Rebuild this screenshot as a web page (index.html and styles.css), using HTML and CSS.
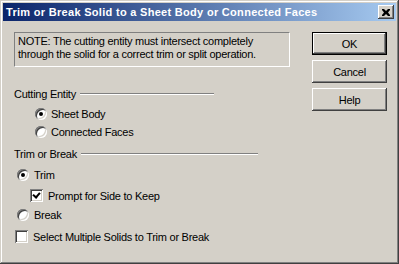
FILE: index.html
```html
<!DOCTYPE html>
<html lang="en">
<head>
  <meta charset="UTF-8">
  <title>Trim or Break Solid</title>
  <link rel="stylesheet" href="styles.css">
</head>
<body>
  <div class="window">
    <div class="titlebar">
      <span class="title">Trim or Break Solid to a Sheet Body or Connected Faces</span>
      <span class="close">
        <svg width="8" height="7" viewBox="0 0 8 7"><path d="M0,0h2l2,2 2,-2h2v1l-2,2.5 2,2.5v1h-2l-2,-2 -2,2h-2v-1l2,-2.5 -2,-2.5z" fill="#000"/></svg>
      </span>
    </div>

    <div class="content">
      <div class="left">
        <div class="note">NOTE: The cutting entity must intersect completely through the solid for a correct trim or split operation.</div>

        <!-- Cutting Entity -->
        <div class="group-head cut-head"><span>Cutting Entity</span><i class="rule"></i></div>
        <div class="indent">
          <div class="opt"><span class="radio on"></span>Sheet Body</div>
          <div class="opt"><span class="radio"></span>Connected Faces</div>
        </div>

        <!-- Trim or Break -->
        <div class="group-head trim-head"><span>Trim or Break</span><i class="rule"></i></div>
        <div class="opt trim"><span class="radio on"></span>Trim</div>
        <div class="opt keep"><span class="check on"></span>Prompt for Side to Keep</div>
        <div class="opt brk"><span class="radio"></span>Break</div>
        <div class="opt multi"><span class="check"></span>Select Multiple Solids to Trim or Break</div>
      </div>

      <div class="buttons">
        <button class="default">OK</button>
        <button>Cancel</button>
        <button>Help</button>
      </div>
    </div>
  </div>
</body>
</html>
```

FILE: styles.css
```css
* { margin: 0; padding: 0; box-sizing: border-box; }
body { background: #d4d0c8; font-family: 'Liberation Sans', Arial, sans-serif; font-size: 11px; color: #000; letter-spacing: -0.25px; }
.window {
  width: 399px; height: 264px; background: #d4d0c8; padding: 3px;
  box-shadow: inset -1px -1px 0 #404040, inset 1px 1px 0 #d4d0c8, inset -2px -2px 0 #808080, inset 2px 2px 0 #fff;
}
.titlebar {
  height: 18px; display: flex; align-items: center; justify-content: space-between; padding: 0 2px 0 3px;
  background: linear-gradient(to right, #0a246a, #a6caf0);
}
.title { color: #fff; font-weight: bold; font-size: 11px; letter-spacing: 0.3px; }
.close {
  width: 16px; height: 14px; background: #d4d0c8; display: flex; align-items: center; justify-content: center;
  box-shadow: inset -1px -1px 0 #404040, inset 1px 1px 0 #fff, inset -2px -2px 0 #808080;
}
.content { display: flex; padding: 11px 9px 0 11px; }
.left { flex: 1; }
.note {
  width: 276px; height: 35px; padding: 2px 3px; line-height: 13px;
  border: 1px solid; border-color: #808080 #fff #fff #808080;
}
.group-head { display: flex; align-items: center; gap: 4px; }
.cut-head { margin-top: 21px; width: 200px; }
.trim-head { margin-top: 10px; width: 244px; }
.rule { flex: 1; height: 2px; border-top: 1px solid #808080; border-bottom: 1px solid #fff; }
.opt { display: flex; align-items: center; height: 13px; }
.indent { padding-left: 21px; margin-top: 7px; display: flex; flex-direction: column; gap: 5px; }
.indent .opt { gap: 4px; }
.trim { margin-top: 8px; padding-left: 3px; gap: 5px; }
.keep { margin-top: 8px; padding-left: 16px; gap: 5px; }
.brk { margin-top: 6px; padding-left: 3px; gap: 5px; }
.multi { margin-top: 9px; padding-left: 1px; gap: 5px; }
.radio {
  width: 12px; height: 12px; border-radius: 50%; background: #fff; position: relative;
  box-shadow: inset 1px 1px 0 #808080, inset -1px -1px 0 #fff, inset 2px 2px 0 #404040, inset -2px -2px 0 #d4d0c8;
}
.radio.on::after { content: ""; position: absolute; left: 4px; top: 4px; width: 4px; height: 4px; border-radius: 50%; background: #000; }
.check {
  width: 13px; height: 13px; background: #fff; position: relative;
  box-shadow: inset 1px 1px 0 #808080, inset -1px -1px 0 #fff, inset 2px 2px 0 #404040, inset -2px -2px 0 #d4d0c8;
}
.check.on::after {
  content: ""; position: absolute; top: 2px; left: 4px; width: 3px; height: 5px;
  border: solid #000; border-width: 0 2px 2px 0; transform: rotate(40deg);
}
.buttons { display: flex; flex-direction: column; gap: 5px; width: 75px; }
button {
  height: 23px; width: 75px; background: #d4d0c8; border: none; font-family: inherit; font-size: 11px; color: #000; letter-spacing: -0.25px;
  box-shadow: inset -1px -1px 0 #404040, inset 1px 1px 0 #fff, inset -2px -2px 0 #808080;
}
button.default {
  box-shadow: inset 0 0 0 1px #000, inset -2px -2px 0 #404040, inset 2px 2px 0 #fff, inset -3px -3px 0 #808080;
}
```
